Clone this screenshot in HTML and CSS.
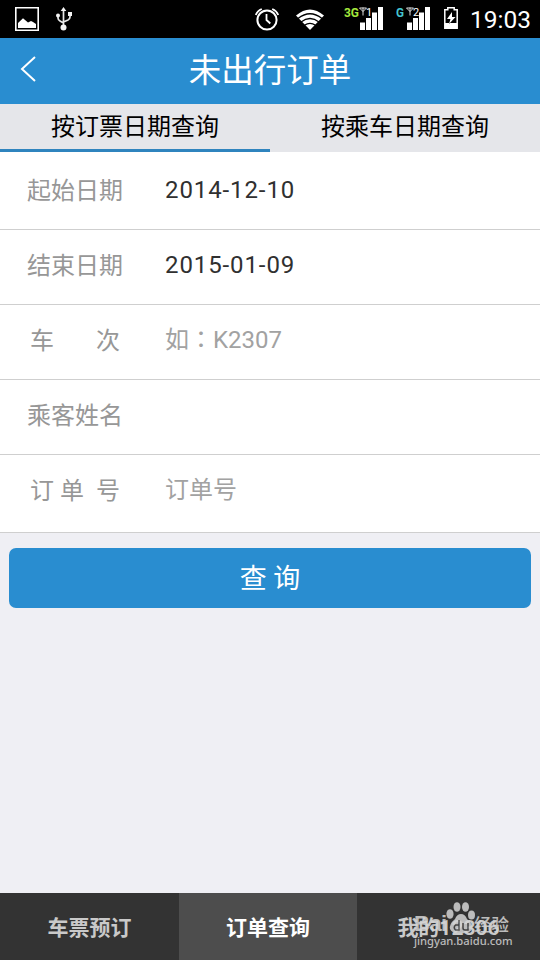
FILE: index.html
```html
<!DOCTYPE html>
<html lang="zh-CN">
<head>
<meta charset="utf-8">
<title>未出行订单</title>
<link rel="stylesheet" href="styles.css">
</head>
<body>
<div class="screen">
  <div class="status">
    <div class="status-group">
      <svg width="24" height="24" viewBox="0 0 24 24"><path fill="none" stroke="#fff" stroke-width="1.6" d="M.8.8h22.4v22.4H.8z"/><path fill="#fff" d="M3 21v-5l5-4.800 5 4.300 3-1.500 2 1 3 2v4z"/></svg>
      <svg class="usb" width="16" height="24" viewBox="0 0 16 24"><g fill="none" stroke="#e8e8e8" stroke-width="1.700"><path d="M7.500 3v17M2 9v2q0 2 2 3l3.500 2M14 7v3q0 2-2 3l-4.500 2"/></g><g fill="#f4f4f4"><circle cx="7.500" cy="20.500" r="3"/><path d="M7.500 0l2.800 4H4.700zM12 5h4v4h-4z"/><circle cx="2" cy="8.500" r="2"/></g></svg>
    </div>
    <div class="status-group">
      <svg width="24" height="24" viewBox="0 0 24 24"><g fill="none" stroke="#fff"><circle cx="12" cy="13" r="9.600" stroke-width="2"/><path stroke-width="1.800" d="M11.500 7v6l3.800 3.500M.8 8q1.600-4.300 6-6M23.200 8q-1.600-4.300-6-6"/></g></svg>
      <svg class="wifi" width="28" height="22" viewBox="0 0 28 22"><path fill="#fff" d="M0 6.500Q14-5.500 28 6.500L14 21z"/><g fill="none" stroke="#000" stroke-width="1.300"><path d="M2 9.500q12-9.500 24 0M5 13q9-7 18 0M8.500 16.300q5.500-4 11 0"/></g></svg>
      <svg class="signal" width="40" height="26" viewBox="0 0 40 26"><text class="net net-3g" x="0" y="13" textLength="15" lengthAdjust="spacingAndGlyphs">3G</text><path fill="none" stroke="#ddd" d="M15.500 4h7l-3.500 3.500L15.500 4M19 3.500v8"/><text class="sim" x="22" y="11.500">1</text><path fill="#fff" d="M16 18.500h5V26h-5zM22 14h5v12h-5zM28 8.500h5V26h-5zM34 3h5v23h-5z"/></svg>
      <svg class="signal2" width="35" height="26" viewBox="0 0 35 26"><text class="net net-g" x="0" y="13" textLength="8" lengthAdjust="spacingAndGlyphs">G</text><path fill="none" stroke="#ddd" d="M10.500 4h7L14 7.500 10.500 4M14 3.500v8"/><text class="sim" x="17" y="11.500">2</text><path fill="#fff" d="M11 18.500h5V26h-5zM17 14h5v12h-5zM23 8.500h5V26h-5zM29 3h5v23h-5z"/></svg>
      <svg class="battery" width="14" height="22" viewBox="0 0 14 22"><path fill="none" stroke="#fff" stroke-width="1.500" d="M.8 2.800h3V.8h6.400v2h3v18.400H.8z"/><path fill="#fff" d="M1 16h12v5H1zM8 5l-5 7h3.500L5 17l6.500-7H8z"/></svg>
      <span class="clock">19:03</span>
    </div>
  </div>
  <header class="header">
    <svg class="back" width="17" height="28" viewBox="0 0 17 28"><path fill="none" stroke="#fff" stroke-width="2" d="M15 2L2 14l13 12"/></svg>
    <h1 class="title">未出行订单</h1>
  </header>
  <nav class="tabs">
    <div class="tab tab-active">按订票日期查询</div>
    <div class="tab">按乘车日期查询</div>
  </nav>
  <main class="form">
    <div class="row row-first"><div class="label">起始日期</div><div class="value">2014-12-10</div></div>
    <div class="row"><div class="label">结束日期</div><div class="value">2015-01-09</div></div>
    <div class="row"><div class="label spread"><span>车</span><span>次</span></div><div class="value hint">如<span class="colon" lang="zh-TW">：</span>K2307</div></div>
    <div class="row"><div class="label">乘客姓名</div></div>
    <div class="row row-last"><div class="label spread"><span>订</span><span class="mid">单</span><span>号</span></div><div class="value hint">订单号</div></div>
  </main>
  <div class="button">查 询</div>
  <footer class="bottom">
    <div class="nav">车票预订</div>
    <div class="nav nav-active">订单查询</div>
    <div class="nav">我的12306
      <div class="mark">
        <div class="mark-brand"><span class="mark-latin">Bai</span><svg class="paw" width="29" height="33" viewBox="0 0 29 33"><ellipse cx="4" cy="12" rx="3.600" ry="4.800"/><ellipse cx="11" cy="5" rx="3.500" ry="4.800"/><ellipse cx="19.500" cy="5" rx="3.500" ry="4.800"/><ellipse cx="25.500" cy="13" rx="3.500" ry="4.500"/><path d="M15 12q4 0 6 5 6 5 5 10-2 5-11 4-9 1-11-4-1-5 5-10 2-5 6-5z"/><path fill="none" stroke="#444" stroke-width="1.500" d="M13 18v10H9.500q-2.500-2.500 0-5H13M17 21v5q0 2 2 2h3v-7"/></svg><span class="mark-cn">经验</span></div>
        <div class="mark-url">jingyan.baidu.com</div>
      </div>
    </div>
  </footer>
</div>
</body>
</html>
```
FILE: styles.css
```css
body {
  margin: 0;
  font-family: Roboto, "Noto Sans CJK SC", sans-serif;
}
.screen {
  display: flex;
  flex-direction: column;
  width: 540px;
  height: 960px;
  overflow: hidden;
  background: #efeff4;
}
.status {
  display: flex;
  justify-content: space-between;
  height: 38px;
  padding: 0 9px 0 15px;
  background: #000;
  color: #fff;
}
.status-group {
  display: flex;
  align-items: flex-start;
  padding-top: 7px;
}
.usb { margin-left: 17px; }
.wifi { margin: 2px 0 0 17px; }
.signal { margin: -3px 0 0 20px; }
.signal2 { margin: -3px 0 0 12px; }
.battery { margin-left: 13px; }
.net { font-size: 12.500px; font-weight: 700; }
.net-3g { fill: #a3e73c; }
.net-g { fill: #45c5d0; }
.sim { font-size: 11px; fill: #fff; }
.clock {
  width: 61px;
  margin-left: 12px;
  font-size: 24.500px;
  line-height: 26px;
  white-space: nowrap;
}
.header {
  display: flex;
  align-items: center;
  height: 66px;
  padding: 0 20px;
  background: #298dd0;
  color: #fff;
}
.back { margin-top: -4px; }
.title {
  flex: 1;
  margin: 0 17px 0 0;
  font-size: 32.500px;
  font-weight: 400;
  line-height: 50px;
  text-align: center;
}
.tabs {
  display: flex;
  height: 48px;
  background: #e5e6ea;
}
.tab {
  box-sizing: border-box;
  width: 270px;
  height: 48px;
  font-size: 24px;
  line-height: 46px;
  text-align: center;
  color: #000;
}
.tab-active { border-bottom: 3px solid #2f84be; }
.form { background: #fff; }
.row {
  display: flex;
  box-sizing: border-box;
  height: 75px;
  padding: 0 27px;
  border-bottom: 1px solid #cfcfcf;
  font-size: 24px;
  line-height: 70px;
}
.row-first {
  height: 78px;
  padding-top: 3px;
}
.row-last { height: 78px; }
.label {
  width: 96px;
  margin-right: 42px;
  line-height: 72px;
  color: #979797;
}
.spread {
  display: flex;
  box-sizing: border-box;
  justify-content: space-between;
  padding: 0 3px;
}
.mid { margin-right: 6px; }
.value {
  letter-spacing: .9px;
  color: #303030;
}
.hint {
  letter-spacing: 0;
  color: #a2a2a2;
}
.colon {
  font-family: "Noto Sans CJK TC", sans-serif;
  line-height: 1;
}
.button {
  height: 60px;
  margin: 15px 9px 0;
  border-radius: 7px;
  background: #298dd0;
  font-size: 27px;
  line-height: 62px;
  text-align: center;
  color: #fff;
}
.bottom {
  display: flex;
  height: 67px;
  margin-top: auto;
  background: #333;
}
.nav {
  position: relative;
  width: 183px;
  font-size: 21px;
  font-weight: 700;
  line-height: 70px;
  text-align: center;
  color: #c9c9c9;
}
.nav:first-child { width: 179px; }
.nav-active {
  width: 178px;
  background: #4d4d4d;
  color: #fff;
}
.mark {
  position: absolute;
  top: 9px;
  left: 57px;
  width: 100px;
  color: #d4d4d4;
  opacity: .85;
}
.mark-brand {
  display: flex;
  height: 34px;
}
.mark-latin {
  width: 32px;
  font-family: "Liberation Sans", sans-serif;
  font-size: 22px;
  line-height: 44px;
  letter-spacing: -.5px;
}
.paw {
  flex: none;
  fill: currentColor;
}
.mark-cn {
  margin-left: -1px;
  font-size: 17.500px;
  font-weight: 500;
  line-height: 47px;
}
.mark-url {
  font-family: "Noto Sans", sans-serif;
  font-size: 11.200px;
  font-weight: 500;
  line-height: 10px;
  text-align: left;
}
```
